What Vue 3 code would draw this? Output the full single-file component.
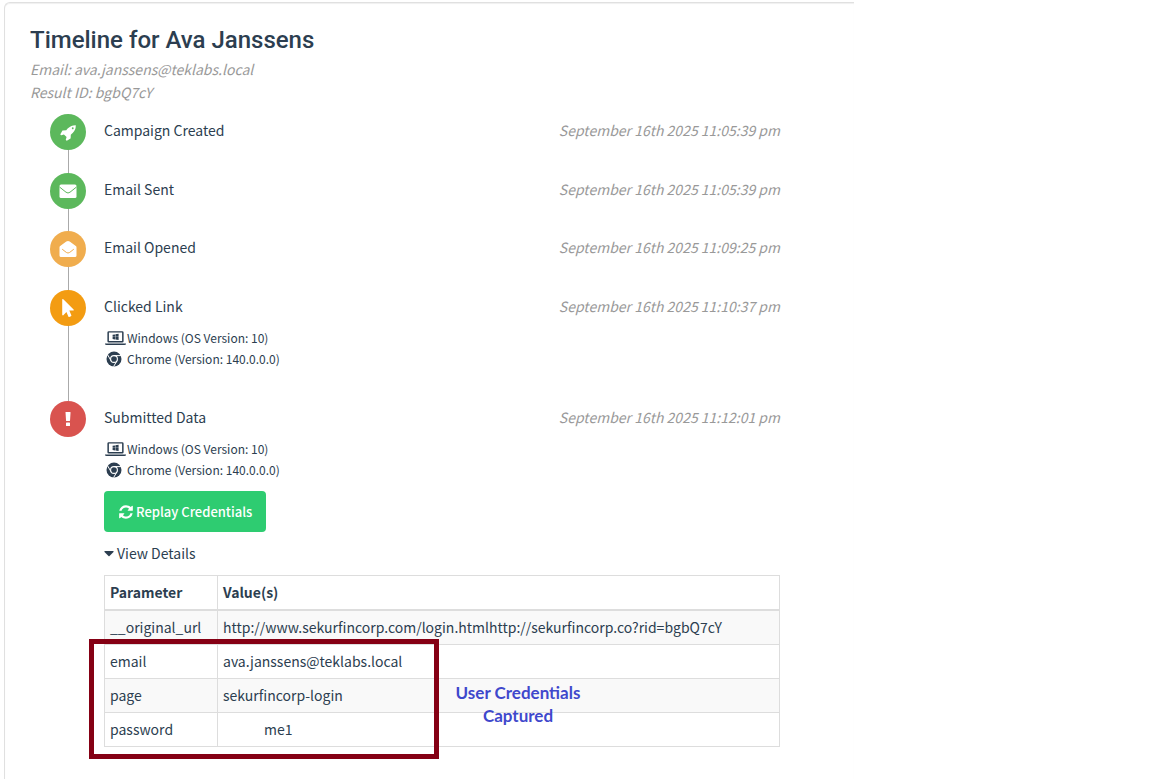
<script setup>
import { ref } from 'vue'

const open = ref(true)

const events = [
  { title: 'Campaign Created', time: 'September 16th 2025 11:05:39 pm', tone: 'green', icon: 'rocket' },
  { title: 'Email Sent', time: 'September 16th 2025 11:05:39 pm', tone: 'green', icon: 'mail' },
  { title: 'Email Opened', time: 'September 16th 2025 11:09:25 pm', tone: 'amber', icon: 'mail-open' },
  { title: 'Clicked Link', time: 'September 16th 2025 11:10:37 pm', tone: 'orange', icon: 'pointer', device: true },
  { title: 'Submitted Data', time: 'September 16th 2025 11:12:01 pm', tone: 'red', icon: 'alert', device: true, details: true },
]

const rows = [
  { name: '__original_url', value: 'http://www.sekurfincorp.com/login.htmlhttp://sekurfincorp.co?rid=bgbQ7cY' },
  { name: 'email', value: 'ava.janssens@teklabs.local' },
  { name: 'page', value: 'sekurfincorp-login' },
  { name: 'password', value: 'me1', masked: true },
]
</script>

<template>
  <main class="page">
    <section class="card">
      <h1>Timeline for Ava Janssens</h1>
      <p class="meta">Email: ava.janssens@teklabs.local</p>
      <p class="meta">Result ID: bgbQ7cY</p>

      <ol class="timeline">
        <li v-for="e in events" :key="e.title" class="event">
          <div class="rail">
            <span class="dot" :class="e.tone">
              <svg v-if="e.icon === 'rocket'" width="17" height="17" viewBox="0 0 1792 1792" fill="#fff"><path d="M1440 448q0-40-28-68t-68-28-68 28-28 68 28 68 68 28 68-28 28-68zm224-288q0 249-75.5 430.5t-253.5 360.5q-81 80-195 176l-20 379q-2 16-16 26l-384 224q-7 4-16 4-12 0-23-9l-64-64q-13-14-8-32l85-276-281-281-276 85q-3 1-9 1-14 0-23-9l-64-64q-17-19-5-39l224-384q10-14 26-16l379-20q96-114 176-195 188-187 358-258t431-71q14 0 24 9.5t10 22.5z" /></svg>
              <svg v-else-if="e.icon === 'mail'" width="18" height="18" viewBox="0 0 18 18"><rect x="0.5" y="2.5" width="17" height="13.5" rx="1.5" fill="#fff" /><path d="M0.5 5 L7 10.2 Q9 11.8 11 10.2 L17.5 5" fill="none" stroke="#5cb85c" stroke-width="1" /></svg>
              <svg v-else-if="e.icon === 'mail-open'" width="18" height="18" viewBox="0 0 18 18"><path d="M0.5 7.2 Q0.5 6.4 1.2 5.9 L7.3 1.5 Q9 0.3 10.7 1.5 L16.8 5.9 Q17.5 6.4 17.5 7.2 V15.5 Q17.5 17 16 17 H2 Q0.5 17 0.5 15.5 Z" fill="#fff" /><path d="M3.2 9.2 L7.3 12.4 Q9 13.7 10.7 12.4 L14.8 9.2" fill="none" stroke="#f0ad4e" stroke-width="1" /></svg>
              <svg v-else-if="e.icon === 'pointer'" width="12" height="18" viewBox="0 0 1152 1792" fill="#fff"><path d="M1133 1043q31 30 14 69-17 40-59 40h-382l201 476q10 25 0 49t-34 35l-177 75q-25 10-49 0t-35-34l-191-452-312 312q-19 19-45 19-12 0-24-5-40-17-40-59v-1504q0-42 40-59 12-5 24-5 27 0 45 19z" /></svg>
              <svg v-else width="6" height="14" viewBox="0 0 6 14" fill="#fff"><path d="M1 0 H5 Q5.5 0 5.5 0.6 L5 8.4 Q4.9 9 4.4 9 H1.6 Q1.1 9 1 8.4 L0.5 0.6 Q0.5 0 1 0 Z" /><rect x="1" y="10.5" width="4" height="3.5" rx="0.6" /></svg>
            </span>
          </div>
          <div class="body">
            <div class="head">
              <span>{{ e.title }}</span>
              <time>{{ e.time }}</time>
            </div>
            <div v-if="e.device" class="device">
              <div class="device-line">
                <svg width="22" height="16" viewBox="0 0 22 16" fill="#2c3e50">
                  <path fill-rule="evenodd" d="M3.8 1.2 H17.2 Q18.6 1.2 18.6 2.6 V11.2 Q18.6 12.4 17.2 12.4 H3.8 Q2.4 12.4 2.4 11.2 V2.6 Q2.4 1.2 3.8 1.2 Z M3.9 2.6 V11 H17.1 V2.6 Z" />
                  <path d="M0 13.4 H21 V14.2 Q20.6 15 19.4 15 H1.6 Q0.4 15 0 14.2 Z" />
                  <path d="M7.6 4.8 L10 4.4 V6.7 H7.6 Z M10.4 4.3 L13.6 3.8 V6.7 H10.4 Z M7.6 7.1 H10 V9.4 L7.6 9 Z M10.4 7.1 H13.6 V10 L10.4 9.5 Z" />
                </svg>
                <span>Windows (OS Version: 10)</span>
              </div>
              <div class="device-line">
                <svg width="22" height="16" viewBox="0 0 22 16">
                  <circle cx="9" cy="8" r="7.5" fill="#2c3e50" />
                  <circle cx="9" cy="8" r="3.4" fill="none" stroke="#fff" stroke-width="1.1" />
                  <path d="M9 4.6 H16 M6 9.7 L2.6 3.8 M12 9.7 L8.6 15.6" stroke="#fff" stroke-width="1" />
                </svg>
                <span>Chrome (Version: 140.0.0.0)</span>
              </div>
            </div>
            <template v-if="e.details">
              <button type="button" class="replay">
                <svg width="16" height="16" viewBox="0 0 1792 1792" fill="#fff"><path d="M1639 1056q0 5-1 7-64 268-268 434.5t-478 166.5q-146 0-282.5-55t-243.5-157l-129 129q-19 19-45 19t-45-19-19-45v-448q0-26 19-45t45-19h448q26 0 45 19t19 45-19 45l-137 137q71 66 161 102t187 36q134 0 250-65t186-179q11-17 53-117 8-23 30-23h192q13 0 22.5 9.5t9.5 22.5zm25-800v448q0 26-19 45t-45 19h-448q-26 0-45-19t-19-45 19-45l138-138q-148-137-349-137-134 0-250 65t-186 179q-11 17-53 117-8 23-30 23h-199q-13 0-22.5-9.5t-9.5-22.5v-7q65-268 270-434.5t480-166.5q146 0 284 55.5t245 156.5l130-129q19-19 45-19t45 19 19 45z" /></svg>
                <span>Replay Credentials</span>
              </button>
              <button type="button" class="toggle" :aria-expanded="open" @click="open = !open">
                <svg width="10" height="6" viewBox="0 0 10 6" fill="#2c3e50"><path d="M0.8 0 H9.2 Q10 0.4 9.5 1 L5.5 5 Q5 5.4 4.5 5 L0.5 1 Q0 0.4 0.8 0 Z" /></svg>
                <span>View Details</span>
              </button>
              <div v-if="open" class="results">
                <table>
                  <thead>
                    <tr><th scope="col" class="param">Parameter</th><th scope="col">Value(s)</th></tr>
                  </thead>
                  <tbody>
                    <tr v-for="r in rows" :key="r.name">
                      <td>{{ r.name }}</td>
                      <td :class="{ masked: r.masked }">{{ r.value }}</td>
                    </tr>
                  </tbody>
                </table>
                <div class="highlight"></div>
                <div class="callout">User Credentials Captured</div>
              </div>
            </template>
          </div>
        </li>
      </ol>
    </section>
  </main>
</template>

<style>
body {
  background: #fff;
}
</style>

<style scoped>
.page {
  box-sizing: border-box;
  min-height: 100vh;
  padding: 2px 0 0 4px;
  display: flex;
  font-family: "Noto Sans CJK SC", "Noto Sans", sans-serif;
  font-size: 14px;
  line-height: 23px;
  color: #2c3e50;
}
.card {
  box-sizing: border-box;
  width: 100%;
  max-width: 850px;
  padding: 21px 74px 20px 25px;
  border: 1px solid #e0e0e0;
  border-width: 1px 0 0 1px;
  border-radius: 6px 0 0 0;
  box-shadow: inset 0 1px 1px #f0f0f0;
}
h1 {
  margin: 0 0 1px;
  font: 500 24px/33px Roboto, sans-serif;
}
.meta {
  margin: 0;
  font-style: italic;
  color: #999;
}
.timeline {
  margin: 10px 0 0;
  padding: 0 0 0 20px;
  list-style: none;
}
.event {
  display: flex;
  gap: 18px;
  min-height: 59px;
}
.event:nth-child(even) {
  min-height: 58px;
}
.rail {
  flex: none;
  width: 36px;
  background: linear-gradient(#aaa, #aaa) 18px 0 / 1px 100% no-repeat;
}
.event:last-child .rail {
  background: none;
}
.dot {
  display: flex;
  align-items: center;
  justify-content: center;
  width: 36px;
  height: 36px;
  border-radius: 50%;
}
.green { background: #5cb85c; }
.amber { background: #f0ad4e; }
.orange { background: #f39c12; }
.red { background: #d9534f; }
.body {
  flex: 1;
  min-width: 0;
}
.head {
  display: flex;
  justify-content: space-between;
  padding: 5px 0 9px;
}
time {
  font-style: italic;
  color: #999;
}
.device {
  padding-bottom: 32px;
  font-size: 12px;
  line-height: 21px;
}
.device-line {
  display: flex;
  align-items: center;
  padding-left: 1px;
}
.event:last-child .device {
  padding-bottom: 11px;
}
button {
  display: flex;
  align-items: center;
  border: 0;
  font: inherit;
  cursor: pointer;
}
.replay {
  gap: 2px;
  height: 41px;
  padding: 0 14px;
  border-radius: 4px;
  background: #2ecc71;
  color: #fff;
  font-size: 13px;
  font-weight: 500;
}
.toggle {
  gap: 3px;
  margin: 10px 0;
  padding: 0;
  background: none;
  color: inherit;
}
.results {
  position: relative;
}
table {
  width: 100%;
  border-collapse: collapse;
}
th,
td {
  height: 23px;
  padding: 5px;
  border: 1px solid #ddd;
  text-align: left;
}
th {
  border-bottom-width: 2px;
}
.param {
  width: 102px;
}
tbody tr:nth-child(odd) {
  background: #f9f9f9;
}
td.masked {
  padding-left: 46px;
}
.highlight {
  position: absolute;
  box-sizing: border-box;
  top: 64px;
  left: -15px;
  width: 350px;
  height: 120px;
  border: 5px solid #850014;
}
.callout {
  position: absolute;
  top: 106px;
  left: 344px;
  width: 140px;
  font: 700 17px/23px Lato, sans-serif;
  text-align: center;
  color: #3f48cc;
}
</style>
